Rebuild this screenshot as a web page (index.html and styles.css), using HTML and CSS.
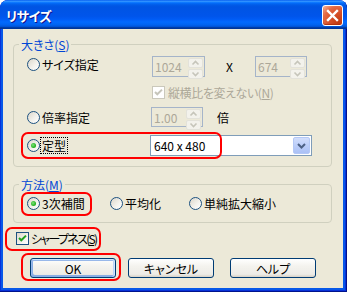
FILE: index.html
```html
<!DOCTYPE html>
<html lang="ja">
<head>
<meta charset="utf-8">
<title>リサイズ</title>
<link rel="stylesheet" href="styles.css">
</head>
<body>
<div class="window">
  <div class="titlebar">
    <span class="title">リサイズ</span>
    <span class="close"><svg width="19" height="19" viewBox="0 0 19 19"><path d="M5 5 L14 14 M14 5 L5 14" stroke="#fff" stroke-width="2.4" stroke-linecap="square"/></svg></span>
  </div>
  <div class="client">
    <fieldset class="group size">
      <legend>大きさ(<u>S</u>)</legend>
      <div class="row r1">
        <span class="opt o-size"><span class="radio"></span><span>サイズ指定</span></span>
        <span class="spin w53"><span class="val">1024</span><span class="arrows"><span class="ab"><svg width="13" height="8" viewBox="0 0 13 8"><path d="M3.5 5.5 L6.5 2.5 L9.5 5.5" fill="none" stroke="#C6C5BA" stroke-width="1.6"/></svg></span><span class="ab"><svg width="13" height="8" viewBox="0 0 13 8"><path d="M3.5 2.5 L6.5 5.5 L9.5 2.5" fill="none" stroke="#C6C5BA" stroke-width="1.6"/></svg></span></span></span>
        <span class="times">X</span>
        <span class="spin w52"><span class="val">674</span><span class="arrows"><span class="ab"><svg width="13" height="8" viewBox="0 0 13 8"><path d="M3.5 5.5 L6.5 2.5 L9.5 5.5" fill="none" stroke="#C6C5BA" stroke-width="1.6"/></svg></span><span class="ab"><svg width="13" height="8" viewBox="0 0 13 8"><path d="M3.5 2.5 L6.5 5.5 L9.5 2.5" fill="none" stroke="#C6C5BA" stroke-width="1.6"/></svg></span></span></span>
      </div>
      <div class="row r2">
        <span class="check disabled"><svg width="11" height="11" viewBox="0 0 11 11"><path d="M2 5 L4.3 7.3 L9 2.6" fill="none" stroke="#C6C5BA" stroke-width="2"/></svg></span>
        <span class="tight">縦横比を変えない(<u>N</u>)</span>
      </div>
      <div class="row r3">
        <span class="opt o-size"><span class="radio"></span><span>倍率指定</span></span>
        <span class="spin w52 s-rate"><span class="val">1.00</span><span class="arrows"><span class="ab"><svg width="13" height="8" viewBox="0 0 13 8"><path d="M3.5 5.5 L6.5 2.5 L9.5 5.5" fill="none" stroke="#C6C5BA" stroke-width="1.6"/></svg></span><span class="ab"><svg width="13" height="8" viewBox="0 0 13 8"><path d="M3.5 2.5 L6.5 5.5 L9.5 2.5" fill="none" stroke="#C6C5BA" stroke-width="1.6"/></svg></span></span></span>
        <span class="bai">倍</span>
      </div>
      <div class="row r4">
        <span class="opt o-size"><span class="radio checked"></span><span class="focus">定型</span></span>
        <span class="combo"><span class="cval">640 x 480</span><span class="drop"><svg width="15" height="17" viewBox="0 0 15 17"><path d="M4 7 L7.5 10.5 L11 7" fill="none" stroke="#4D6185" stroke-width="2"/></svg></span></span>
      </div>
    </fieldset>
    <fieldset class="group method">
      <legend>方法(<u>M</u>)</legend>
      <div class="row r5">
        <span class="opt o-m1"><span class="radio checked"></span><span>3次補間</span></span>
        <span class="opt o-m2"><span class="radio"></span><span>平均化</span></span>
        <span class="opt"><span class="radio"></span><span>単純拡大縮小</span></span>
      </div>
    </fieldset>
    <div class="sharp">
      <span class="check"><svg width="11" height="11" viewBox="0 0 11 11"><path d="M2 5 L4.3 7.3 L9 2.6" fill="none" stroke="#21A121" stroke-width="2"/></svg></span>
      <span class="tighter">シャープネス(<u>S</u>)</span>
    </div>
    <div class="buttons">
      <span class="btn default">OK</span>
      <span class="btn b-cancel">キャンセル</span>
      <span class="btn b-help">ヘルプ</span>
    </div>
  </div>
  <div class="annot a1"></div>
  <div class="annot a2"></div>
  <div class="annot a3"></div>
  <div class="annot a4"></div>
</div>
</body>
</html>
```
FILE: styles.css
```css
* { box-sizing: border-box; }

body {
  margin: 0;
  background: #ffffff;
  font-family: "Noto Sans CJK JP", "Noto Sans", sans-serif;
  font-size: 12px;
  line-height: 13px;
  font-feature-settings: "palt";
  color: #000;
}

.window {
  position: relative;
  width: 347px;
  height: 292px;
  display: flex;
  flex-direction: column;
  background: #0758E8;
  border-radius: 8px 8px 0 0;
  overflow: hidden;
  box-shadow: inset -1px -1px 0 #00138C, inset -2px -2px 0 #0831D9, inset 1px 0 0 #0831D9;
}

.titlebar {
  flex: none;
  height: 29px;
  display: flex;
  align-items: center;
  justify-content: space-between;
  padding: 2px 4px 0 6px;
  background: linear-gradient(to bottom, #0058EE 0%, #3593FF 4%, #288EFF 6%, #127DFF 8%, #036FFC 10%, #0262EE 14%, #0057E5 20%, #0054E3 24%, #0055EB 56%, #005BF5 66%, #026AFE 76%, #0062EF 86%, #0052D6 92%, #0040AB 94%, #003092 100%);
  border-radius: 8px 8px 0 0;
}

.title {
  color: #fff;
  font-weight: bold;
  font-size: 13px;
  letter-spacing: -0.5px;
  text-shadow: 1px 1px 0 #0F1089;
}

.close {
  width: 21px;
  height: 21px;
  display: flex;
  align-items: center;
  justify-content: center;
  border: 1px solid #fff;
  border-radius: 3px;
  background: radial-gradient(circle at 85% 85%, #C13A12 0%, #D9522A 45%, #E46A45 70%, #F3A487 92%, #FFD9C9 100%);
  box-shadow: inset 0 -1px 1px #B0300E;
}

.client {
  flex: 1;
  margin: 0 4px 4px 3px;
  background: #ECE9D8;
  padding: 9px 11px 0 10px;
  display: flex;
  flex-direction: column;
}

.group {
  margin: 0;
  min-width: 0;
  border: 1px solid #D0D0BF;
  border-radius: 4px;
  padding: 5px 10px 10px 13px;
}

legend {
  padding: 0 2px;
  margin-left: -8px;
  color: #0046D5;
  line-height: 13px;
}

.row {
  display: flex;
  align-items: center;
}

.opt {
  display: flex;
  align-items: center;
  gap: 2px;
  flex: none;
}

.o-size { width: 125px; }
.o-m1 { width: 83px; }
.o-m2 { width: 79px; }

.tight { letter-spacing: -0.4px; }
.tighter { letter-spacing: -1.7px; }

.r1 { height: 21px; }
.r1 .opt { align-self: flex-start; margin-top: 2px; }
.r2 { height: 13px; margin-top: 9px; padding-left: 125px; color: #ACA899; gap: 3px; }
.r3 { height: 20px; margin-top: 8px; }
.r4 { height: 21px; margin-top: 8px; }

.radio {
  width: 13px;
  height: 13px;
  flex: none;
  border-radius: 50%;
  border: 1px solid #1C5180;
  background: linear-gradient(135deg, #DCD7CB 0%, #F4F3EE 60%, #FFFFFF 100%);
  display: flex;
  align-items: center;
  justify-content: center;
}

.radio.checked::after {
  content: "";
  width: 5px;
  height: 5px;
  border-radius: 50%;
  background: radial-gradient(circle at 40% 40%, #7EE27A 0%, #29B524 60%, #16951A 100%);
}

.check {
  width: 13px;
  height: 13px;
  flex: none;
  border: 1px solid #1C5180;
  background: linear-gradient(135deg, #DCD7CB 0%, #F4F3EE 60%, #FFFFFF 100%);
  display: flex;
  align-items: center;
  justify-content: center;
}

.check.disabled {
  border-color: #CAC8BB;
  background: #FFFFFF;
}

.focus {
  outline: 1px dotted #000;
  outline-offset: 1px;
}

.spin {
  display: flex;
  height: 21px;
  border: 1px solid #A5B4C9;
  background: #ECE9D8;
  padding: 1px;
}

.w53 { width: 53px; }
.w52 { width: 52px; }
.s-rate { height: 20px; margin-left: -1px; }

.val {
  flex: 1;
  color: #ACA899;
  padding-left: 1px;
  line-height: 17px;
}

.arrows {
  width: 15px;
  display: flex;
  flex-direction: column;
  gap: 1px;
}

.ab {
  flex: 1;
  display: flex;
  align-items: center;
  justify-content: center;
  border: 1px solid #E3E2DA;
  border-radius: 2px;
  background: #F3F2EC;
}

.times { margin-left: 21px; width: 29px; }
.bai { margin-left: 14px; }

.combo {
  display: flex;
  width: 162px;
  height: 21px;
  margin-left: -2px;
  border: 1px solid #7F9DB9;
  background: #fff;
  padding: 1px;
}

.cval {
  flex: 1;
  padding-left: 2px;
  line-height: 17px;
}

.drop {
  width: 17px;
  display: flex;
  align-items: center;
  justify-content: center;
  border: 1px solid #B4C8F6;
  border-radius: 2px;
  background: linear-gradient(to bottom, #D2DEFC 0%, #BCCEF9 50%, #ABC1F6 100%);
}

.method {
  margin-top: 11px;
  padding: 6px 10px 12px 13px;
}

.r5 { height: 13px; }

.sharp {
  margin-top: 9px;
  margin-left: 3px;
  display: flex;
  align-items: center;
  gap: 2px;
  height: 13px;
}

.buttons {
  margin-top: 13px;
  display: flex;
  padding-left: 17px;
}

.btn {
  width: 86px;
  height: 20px;
  display: flex;
  align-items: center;
  justify-content: center;
  border: 1px solid #003C74;
  border-radius: 3px;
  background: linear-gradient(to bottom, #FFFFFF 0%, #F4F3EE 40%, #ECEBE6 85%, #D6D0C5 100%);
}

.btn.default {
  box-shadow: inset -1px 1px #CEE7FF, inset 1px 2px #98B8EA, inset -2px 0 #BCD4F6, inset 1px -1px #89ADE4, inset 2px -2px #89ADE4;
}

.b-cancel { margin-left: 12px; }
.b-help { margin-left: 16px; }

.annot {
  position: absolute;
  border: 2px solid #FF0000;
  border-radius: 7px;
  pointer-events: none;
}

.a1 { left: 21px; top: 132px; width: 201px; height: 27px; }
.a2 { left: 21px; top: 192px; width: 71px; height: 24px; }
.a3 { left: 5px; top: 227px; width: 96px; height: 24px; }
.a4 { left: 21px; top: 253px; width: 100px; height: 28px; }
```
